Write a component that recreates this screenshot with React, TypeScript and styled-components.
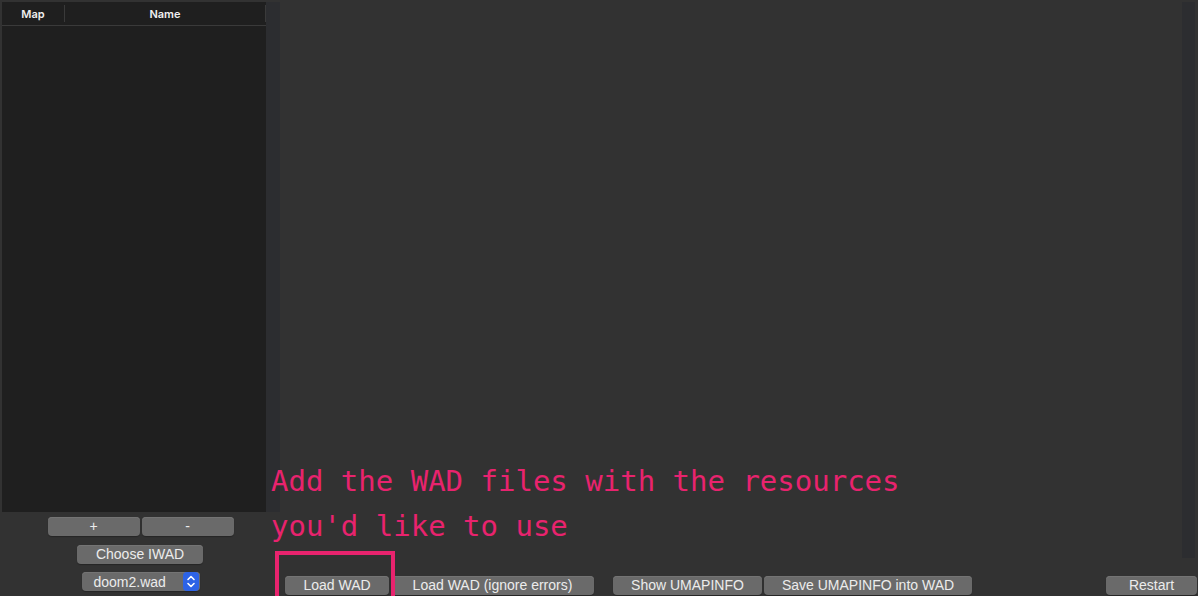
import React from "react";
import styled, { createGlobalStyle } from "styled-components";

const Global = createGlobalStyle`
  html, body { margin: 0; padding: 0; background: #323232; overflow: hidden; }
  * { box-sizing: border-box; }
`;

const Root = styled.div`
  position: relative;
  width: 1198px;
  height: 596px;
  display: flex;
  background: #323232;
  font-family: "Liberation Sans", Arial, sans-serif;
  overflow: hidden;
`;

const Sidebar = styled.div`
  width: 280px;
  display: flex;
  flex-direction: column;
  padding-top: 2px;
`;

const TableRow = styled.div`
  display: flex;
  height: 510px;
`;

const Table = styled.div`
  width: 264px;
  margin-left: 2px;
  background: #1f1f1f;
  display: flex;
  flex-direction: column;
`;

const Header = styled.div`
  height: 24px;
  display: flex;
  align-items: center;
  border-bottom: 1px solid #3a3a3a;
`;

const HeaderCell = styled.div<{ $w?: number }>`
  ${(p) => (p.$w ? `width: ${p.$w}px;` : "flex: 1;")}
  height: 17px;
  display: flex;
  align-items: center;
  justify-content: center;
  border-right: 1px solid #3a3a3a;
  color: #f0f0f0;
  font-family: Inter, "Liberation Sans", sans-serif;
  font-size: 11px;
  font-weight: 600;
`;

const Track = styled.div`
  width: 14px;
  background: #2c2d30;
`;

const Controls = styled.div`
  display: flex;
  flex-direction: column;
  align-items: center;
  padding-top: 5px;
  gap: 9px;
`;

const PlusMinus = styled.div`
  display: flex;
  gap: 2px;
  padding-left: 1px;
`;

const Btn = styled.button<{ $w: number }>`
  width: ${(p) => p.$w}px;
  height: 19px;
  padding: 0;
  border: none;
  border-radius: 4px;
  background: #6a6a6a;
  box-shadow: inset 0 1px 0 #747474, 0 1px 1px rgba(0,0,0,0.25);
  color: #ececec;
  font-family: "Liberation Sans", Arial, sans-serif;
  font-size: 14px;
  line-height: 19px;
  text-align: center;
  flex: none;
`;

const Popup = styled.div`
  width: 118px;
  height: 19px;
  margin-left: 1px;
  margin-top: -1px;
  border-radius: 4px;
  background: #6a6a6a;
  box-shadow: inset 0 1px 0 #747474, 0 1px 1px rgba(0,0,0,0.25);
  display: flex;
  align-items: center;
  padding-left: 12px;
  color: #ececec;
  font-size: 14px;
`;

const PopupLabel = styled.span`
  flex: 1;
`;

const Stepper = styled.div`
  width: 16px;
  height: 19px;
  margin-right: 1px;
  border-radius: 4px;
  background: #2d63e6;
  display: flex;
  align-items: center;
  justify-content: center;
`;

const Main = styled.div`
  flex: 1;
  display: flex;
  flex-direction: column;
`;

const ContentRow = styled.div`
  display: flex;
  padding-top: 2px;
  height: 558px;
`;

const TextArea = styled.div`
  flex: 1;
`;

const RightTrack = styled.div`
  width: 13px;
  margin-right: 3px;
  background: #2c2d30;
`;

const ButtonBar = styled.div`
  display: flex;
  align-items: flex-start;
  padding-top: 18px;
  padding-left: 5px;
  padding-right: 1px;
`;

const Spacer = styled.div<{ $w?: number }>`
  ${(p) => (p.$w ? `width: ${p.$w}px;` : "flex: 1;")}
  flex-shrink: 0;
`;

const Message = styled.div`
  position: absolute;
  left: 271px;
  top: 459px;
  color: #e8236e;
  font-family: "DejaVu Sans Mono", "Liberation Mono", monospace;
  font-size: 29px;
  line-height: 45px;
  white-space: pre;
  pointer-events: none;
`;

const Highlight = styled.div`
  position: absolute;
  left: 275px;
  top: 551px;
  width: 120px;
  height: 50px;
  border: 4px solid #e8236e;
  pointer-events: none;
`;

const StepIcon = () => (
  <svg width="10" height="15" viewBox="0 0 10 15">
    <path d="M2 5.5 L5 2.5 L8 5.5" fill="none" stroke="#fff" strokeWidth="1.6" strokeLinecap="round" strokeLinejoin="round" />
    <path d="M2 9.5 L5 12.5 L8 9.5" fill="none" stroke="#fff" strokeWidth="1.6" strokeLinecap="round" strokeLinejoin="round" />
  </svg>
);

export default function App() {
  return (
    <>
      <Global />
      <Root>
        <Sidebar>
          <TableRow>
            <Table>
              <Header>
                <HeaderCell $w={63}>Map</HeaderCell>
                <HeaderCell>Name</HeaderCell>
              </Header>
            </Table>
            <Track />
          </TableRow>
          <Controls>
            <PlusMinus>
              <Btn $w={92}>+</Btn>
              <Btn $w={92}>-</Btn>
            </PlusMinus>
            <Btn $w={126}>Choose IWAD</Btn>
            <Popup>
              <PopupLabel>doom2.wad</PopupLabel>
              <Stepper>
                <StepIcon />
              </Stepper>
            </Popup>
          </Controls>
        </Sidebar>
        <Main>
          <ContentRow>
            <TextArea />
            <RightTrack />
          </ContentRow>
          <ButtonBar>
            <Btn $w={104}>Load WAD</Btn>
            <Spacer $w={2} />
            <Btn $w={203}>Load WAD (ignore errors)</Btn>
            <Spacer $w={19} />
            <Btn $w={149}>Show UMAPINFO</Btn>
            <Spacer $w={2} />
            <Btn $w={208}>Save UMAPINFO into WAD</Btn>
            <Spacer />
            <Btn $w={91}>Restart</Btn>
          </ButtonBar>
        </Main>
        <Message>{"Add the WAD files with the resources\nyou'd like to use"}</Message>
        <Highlight />
      </Root>
    </>
  );
}
